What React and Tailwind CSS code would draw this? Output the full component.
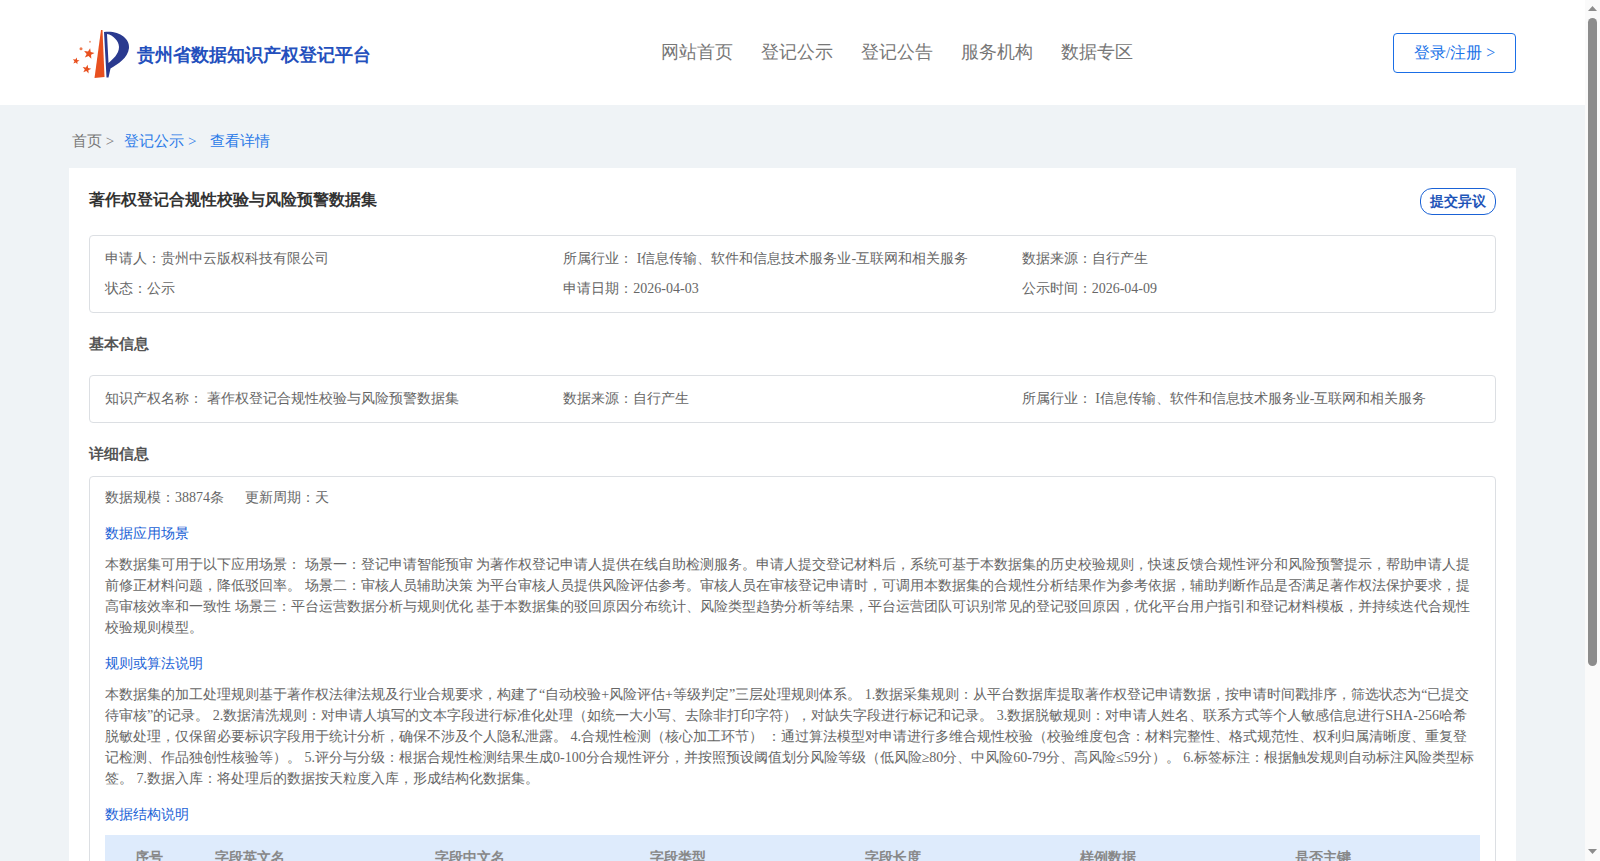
const navItems = ["网站首页", "登记公示", "登记公告", "服务机构", "数据专区"];

const tableHeaders = ["字段英文名", "字段中文名", "字段类型", "字段长度", "样例数据", "是否主键"];

const tableRows = [
  ["1", "apply_id", "申请编号", "string", "32", "AP20260403001", "是"],
  ["2", "work_name", "作品名称", "string", "128", "示例作品", "否"],
  ["3", "risk_score", "合规评分", "int", "3", "85", "否"],
  ["4", "risk_level", "风险等级", "string", "8", "低风险", "否"],
];

const star = (cx, cy, r) => {
  const pts = [];
  for (let i = 0; i < 10; i++) {
    const a = -Math.PI / 2 + (i * Math.PI) / 5 + 0.2;
    const d = i % 2 ? r * 0.42 : r;
    pts.push(`${(cx + d * Math.cos(a)).toFixed(2)},${(cy + d * Math.sin(a)).toFixed(2)}`);
  }
  return pts.join(" ");
};

const Logo = () => (
  <svg width="60" height="52" viewBox="71 27 60 52" className="shrink-0">
    <polygon points="101,29 102.5,29 104.5,76 94.5,77" fill="#e8501f" />
    <path
      d="M104 31 C118 29 130 37 129 47 C128 57 118 63 110.5 67.5 L108.5 76.5 L106.5 76.5 Z M107 33 C113 34 119 40 119 46 C119 53 113 58 108.5 62 Z"
      fill="#2a3a8f"
      fillRule="evenodd"
    />
    <polygon points={star(89, 52.7, 5.6)} fill="#e8501f" />
    <polygon points={star(76, 60, 3.6)} fill="#e8501f" />
    <polygon points={star(86.7, 68.2, 4.6)} fill="#e8501f" />
    <circle cx="81" cy="47.7" r="1.5" fill="#ee7a50" />
    <circle cx="90" cy="40.7" r="1" fill="#f0a080" />
  </svg>
);

const InfoBox = ({ children, className }) => (
  <div className={`border border-[#dcdfe3] rounded-[4px] px-[15px] ${className}`}>{children}</div>
);

const Section = ({ title, children }) => (
  <>
    <div className="text-[14px] leading-[21px] text-[#1a62d6] mt-[15px] mb-[10px]">{title}</div>
    {children}
  </>
);

const Scrollbar = () => (
  <div className="w-[15px] shrink-0 bg-[#fafafa] flex flex-col items-center pt-[6px] pb-[7px]">
    <svg width="9" height="5" viewBox="0 0 9 5">
      <polygon points="4.5,0 9,5 0,5" fill="#8c8c8c" />
    </svg>
    <div className="w-[9px] h-[648px] mt-[7px] bg-[#8c8c8c] rounded-[5px]" />
    <svg width="9" height="5" viewBox="0 0 9 5" className="mt-auto">
      <polygon points="0,0 9,0 4.5,5" fill="#8c8c8c" />
    </svg>
  </div>
);

export default function App() {
  return (
    <div className="flex h-[861px] overflow-hidden font-['Liberation_Serif',serif] text-[#666]">
      <div className="flex-1 min-w-0 overflow-hidden bg-[#eff3f6]">
        {/* Header */}
        <header className="h-[105px] bg-white flex items-center pl-[71px] pr-[69px]">
          <div className="flex items-center w-[590px] pt-[2px]">
            <Logo />
            <span className="ml-[6px] text-[18px] font-bold text-[#2450bd] mt-[3px]">贵州省数据知识产权登记平台</span>
          </div>
          <nav className="flex gap-[28px] text-[18px] text-[#777]">
            {navItems.map((item) => (
              <a key={item}>{item}</a>
            ))}
          </nav>
          <button className="ml-auto w-[123px] h-[40px] pt-[1px] border border-[#1a6ee6] rounded-[4px] text-[16px] text-[#1a73e8]">
            登录/注册 &gt;
          </button>
        </header>

        {/* Breadcrumb */}
        <div className="h-[63px] pt-[10px] flex items-center pl-[72px] text-[15px]">
          <span className="text-[#777]">首页 &gt;</span>
          <span className="ml-[10px] text-[#2a7ae8]">登记公示 &gt;</span>
          <span className="ml-[14px] text-[#2a7ae8]">查看详情</span>
        </div>

        {/* Detail card */}
        <main className="mx-[69px] bg-white px-[20px] pt-[20px] pb-[20px]">
          <div className="flex justify-between items-start h-[47px]">
            <h1 className="text-[16px] font-bold text-[#333] leading-[24px]">著作权登记合规性校验与风险预警数据集</h1>
            <button className="w-[76px] h-[27px] border border-[#1a62d6] rounded-[12px] text-[14px] font-bold text-[#1f55b8]">
              提交异议
            </button>
          </div>

          <InfoBox className="h-[78px] pb-[2px] grid grid-cols-3 content-center gap-y-[9px] text-[14px] leading-[21px]">
            <div>申请人：贵州中云版权科技有限公司</div>
            <div>所属行业： I信息传输、软件和信息技术服务业-互联网和相关服务</div>
            <div>数据来源：自行产生</div>
            <div>状态：公示</div>
            <div>申请日期：2026-04-03</div>
            <div>公示时间：2026-04-09</div>
          </InfoBox>

          <h2 className="text-[15px] font-bold text-[#555] mt-[20px] mb-[20px] leading-[22px]">基本信息</h2>

          <InfoBox className="h-[48px] pb-[2px] grid grid-cols-3 items-center text-[14px]">
            <div>知识产权名称： 著作权登记合规性校验与风险预警数据集</div>
            <div>数据来源：自行产生</div>
            <div>所属行业： I信息传输、软件和信息技术服务业-互联网和相关服务</div>
          </InfoBox>

          <h2 className="text-[15px] font-bold text-[#555] mt-[20px] mb-[11px] leading-[22px]">详细信息</h2>

          <InfoBox className="pt-[10px] pb-[20px] text-[14px]">
            <div className="leading-[21px] flex gap-[21px]">
              <span>数据规模：38874条</span>
              <span>更新周期：天</span>
            </div>

            <Section title="数据应用场景">
              <p className="leading-[21px]">
                本数据集可用于以下应用场景： 场景一：登记申请智能预审 为著作权登记申请人提供在线自助检测服务。申请人提交登记材料后，系统可基于本数据集的历史校验规则，快速反馈合规性评分和风险预警提示，帮助申请人提前修正材料问题，降低驳回率。 场景二：审核人员辅助决策 为平台审核人员提供风险评估参考。审核人员在审核登记申请时，可调用本数据集的合规性分析结果作为参考依据，辅助判断作品是否满足著作权法保护要求，提高审核效率和一致性 场景三：平台运营数据分析与规则优化 基于本数据集的驳回原因分布统计、风险类型趋势分析等结果，平台运营团队可识别常见的登记驳回原因，优化平台用户指引和登记材料模板，并持续迭代合规性校验规则模型。
              </p>
            </Section>

            <Section title="规则或算法说明">
              <p className="leading-[21px]">
                本数据集的加工处理规则基于著作权法律法规及行业合规要求，构建了“自动校验+风险评估+等级判定”三层处理规则体系。 1.数据采集规则：从平台数据库提取著作权登记申请数据，按申请时间戳排序，筛选状态为“已提交待审核”的记录。 2.数据清洗规则：对申请人填写的文本字段进行标准化处理（如统一大小写、去除非打印字符），对缺失字段进行标记和记录。 3.数据脱敏规则：对申请人姓名、联系方式等个人敏感信息进行SHA-256哈希脱敏处理，仅保留必要标识字段用于统计分析，确保不涉及个人隐私泄露。 4.合规性检测（核心加工环节）&nbsp;：通过算法模型对申请进行多维合规性校验（校验维度包含：材料完整性、格式规范性、权利归属清晰度、重复登记检测、作品独创性核验等）。 5.评分与分级：根据合规性检测结果生成0-100分合规性评分，并按照预设阈值划分风险等级（低风险≥80分、中风险60-79分、高风险≤59分）。 6.标签标注：根据触发规则自动标注风险类型标签。 7.数据入库：将处理后的数据按天粒度入库，形成结构化数据集。
              </p>
            </Section>

            <Section title="数据结构说明">
              <table className="w-full table-fixed">
                <thead>
                  <tr className="bg-[#deebfc] h-[44px] text-left text-[14px] font-bold text-[#888]">
                    <th className="w-[80px] pl-[30px] font-bold">序号</th>
                    {tableHeaders.map((h, i) => (
                      <th key={h} className={i === 0 ? "w-[220px] pl-[30px] font-bold" : "pl-[30px] font-bold"}>{h}</th>
                    ))}
                  </tr>
                </thead>
                <tbody>
                  {tableRows.map((row) => (
                    <tr key={row[0]} className="h-[44px] border-b border-[#eee]">
                      {row.map((cell, i) => (
                        <td key={i} className="pl-[30px]">{cell}</td>
                      ))}
                    </tr>
                  ))}
                </tbody>
              </table>
            </Section>
          </InfoBox>
        </main>
      </div>
      <Scrollbar />
    </div>
  );
}
